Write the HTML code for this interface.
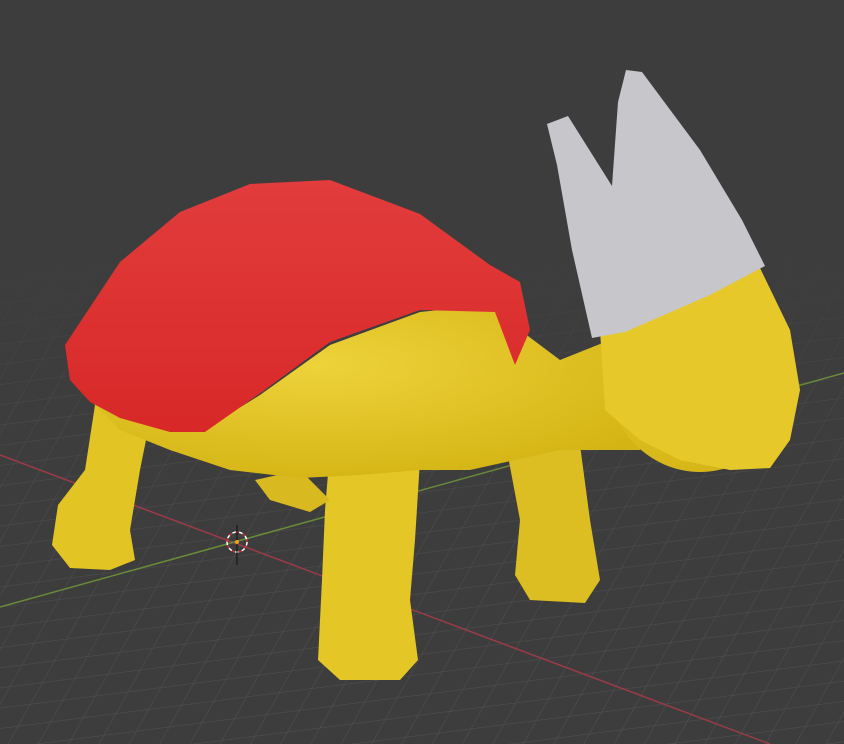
<!DOCTYPE html>
<html><head><meta charset="utf-8"><style>html,body{margin:0;padding:0;background:#3d3d3d;overflow:hidden}svg{display:block}</style></head><body>
<svg width="844" height="744" viewBox="0 0 844 744" xmlns="http://www.w3.org/2000/svg">
<defs>
<pattern id="g" width="30" height="22" patternUnits="userSpaceOnUse" patternTransform="skewX(-35) rotate(-8)">
<path d="M0 0H30M0 0V22" stroke="#505050" stroke-width="1.3" fill="none"/>
</pattern>
<linearGradient id="fade" x1="0" y1="0" x2="0" y2="1">
<stop offset="0" stop-color="#fff" stop-opacity="0"/><stop offset="0.3" stop-color="#fff" stop-opacity="0.7"/><stop offset="1" stop-color="#fff" stop-opacity="1"/></linearGradient>
<mask id="m"><rect x="0" y="250" width="844" height="494" fill="url(#fade)"/></mask>
<radialGradient id="hy" cx="0.4" cy="0.35" r="0.7"><stop offset="0" stop-color="#eed23a"/><stop offset="1" stop-color="#d4b414"/></radialGradient>
<linearGradient id="rd" x1="0" y1="0" x2="0" y2="1"><stop offset="0" stop-color="#e23c3c"/><stop offset="1" stop-color="#d82828"/></linearGradient>
</defs>
<rect width="844" height="744" fill="#3d3d3d"/>
<rect x="0" y="250" width="844" height="494" fill="url(#g)" mask="url(#m)"/>
<line x1="0" y1="455" x2="770" y2="744" stroke="#9a3c48" stroke-width="1.5"/>
<line x1="0" y1="607" x2="844" y2="373" stroke="#6a8a3a" stroke-width="1.5"/>
<path d="M95 405 L150 420 L140 470 L130 530 L135 560 L110 570 L70 568 L52 545 L58 505 L85 470 Z" fill="#e2c424"/>
<path d="M330 450 L420 460 L415 540 L410 600 L418 660 L400 680 L340 680 L318 660 L322 580 L325 510 Z" fill="#e4c626"/>
<path d="M505 440 L580 445 L590 520 L600 580 L585 603 L530 600 L515 575 L520 520 Z" fill="#dcbe22"/>
<path d="M255 480 L300 470 L330 500 L310 512 L270 500 Z" fill="#d8ba20"/>
<path d="M90 400 L150 420 L200 432 L260 395 L330 345 L420 312 L490 305 L520 330 L560 360 L610 340 L640 330 L660 400 L640 450 L560 450 L470 470 L420 470 L360 475 L300 478 L230 470 L170 450 L120 430 Z" fill="url(#hy)"/>
<ellipse cx="700" cy="370" rx="95" ry="102" fill="url(#hy)"/>
<path d="M600 330 L640 300 L700 285 L760 268 L790 330 L800 390 L790 440 L770 468 L730 470 L680 460 L640 440 L605 410 Z" fill="#e6c82a"/>
<path d="M65 345 L120 262 L180 212 L250 184 L330 180 L420 214 L490 265 L520 282 L530 330 L515 365 L495 312 L420 310 L330 342 L262 392 L205 432 L170 432 L120 418 L90 402 L70 380 Z" fill="url(#rd)"/>
<path d="M592 338 L572 250 L557 165 L547 124 L568 116 L612 186 L618 102 L626 70 L642 72 L700 150 L742 220 L765 266 L710 295 L625 332 Z" fill="#c6c6cb"/>
<circle cx="237" cy="542" r="10" fill="none" stroke="#fff" stroke-width="1.5" stroke-dasharray="4 3"/>
<circle cx="237" cy="542" r="10" fill="none" stroke="#c33" stroke-width="1.5" stroke-dasharray="3 4" stroke-dashoffset="3.5"/>
<line x1="237" y1="525" x2="237" y2="565" stroke="#111" stroke-width="1"/>
<circle cx="237" cy="542" r="2" fill="#f0a020"/>
</svg>
</body></html>
